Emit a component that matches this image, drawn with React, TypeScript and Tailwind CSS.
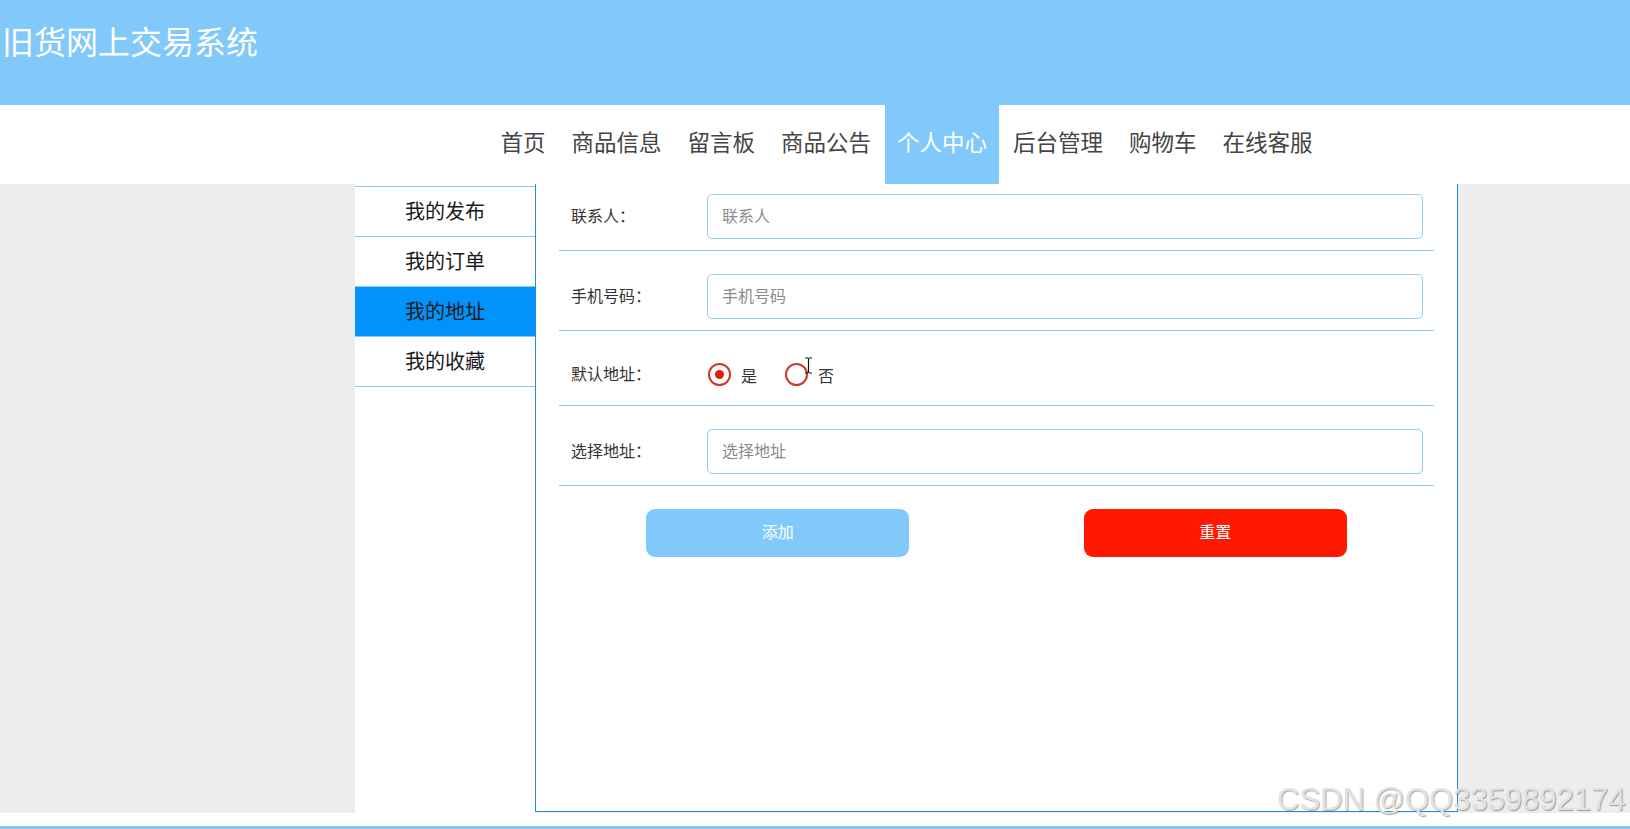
import React from "react";

const navItems = ["首页", "商品信息", "留言板", "商品公告", "个人中心", "后台管理", "购物车", "在线客服"];
const sideItems = ["我的发布", "我的订单", "我的地址", "我的收藏"];

function InputRow({ label, placeholder, first }: { label: string; placeholder: string; first?: boolean }) {
  return (
    <div className={`flex items-center border-b border-[#8cc9ee] pt-[10px] pb-[11px] ${first ? "" : "mt-[13px]"}`}>
      <div className="w-[148px] pl-[12px] pb-[4px] text-[16px] leading-[20px] text-[#333]">{label}</div>
      <input
        className="w-[716px] h-[45px] rounded-[5px] border border-[#93cbee] px-[14px] pb-[3px] text-[16px] text-[#333] placeholder:text-[#8a8a8a] outline-none"
        placeholder={placeholder}
      />
    </div>
  );
}

function Radio({ checked, label }: { checked?: boolean; label: string }) {
  return (
    <div className="flex items-center">
      <span className="w-[23px] h-[23px] rounded-full border-2 border-[#c9392c] flex items-center justify-center">
        {checked && <span className="w-[9px] h-[9px] rounded-full bg-[#e31a0c]" />}
      </span>
      <span className="ml-[10px] text-[16px] leading-[20px] text-[#333]">{label}</span>
    </div>
  );
}

export default function App() {
  return (
    <div className="relative min-h-screen bg-white font-['Noto_Sans_CJK_SC','Noto_Sans',sans-serif]">
      <header className="h-[105px] bg-[#82c9fb] pt-[24px]">
        <h1 className="pl-[2px] text-[32px] leading-[32px] text-white font-normal">旧货网上交易系统</h1>
      </header>

      <nav className="h-[79px] bg-white flex">
        <div className="ml-[355px] w-[1103px] flex justify-center gap-[2px]">
          {navItems.map((n) => (
            <div
              key={n}
              className={`h-full flex items-center px-[12px] pb-[7px] text-[22.5px] leading-[24px] ${
                n === "个人中心" ? "bg-[#82c9fb] text-white" : "text-[#444]"
              }`}
            >
              {n}
            </div>
          ))}
        </div>
      </nav>

      <main className="h-[629px] bg-[#ededed] flex">
        <div className="ml-[355px] flex h-full">
          <aside className="w-[180px] bg-white pt-[2px]">
            <ul className="border-t border-[#8cc9ee]">
              {sideItems.map((s) => (
                <li
                  key={s}
                  className={`h-[50px] border-b border-[#8cc9ee] flex items-center justify-center pb-[2px] text-[20px] leading-[24px] text-[#1a1a1a] ${
                    s === "我的地址" ? "bg-[#0093fc]" : ""
                  }`}
                >
                  {s}
                </li>
              ))}
            </ul>
          </aside>

          <section className="w-[923px] h-[628px] bg-white border-l border-r border-b border-[#1f90d6] px-[23px]">
            <InputRow first label="联系人：" placeholder="联系人" />
            <InputRow label="手机号码：" placeholder="手机号码" />
            <div className="flex items-center border-b border-[#8cc9ee] pt-[10px] pb-[11px] mt-[13px] h-[62px]">
              <div className="w-[148px] pl-[12px] pb-[2px] text-[16px] leading-[20px] text-[#333]">默认地址：</div>
              <div className="flex items-center gap-[28px] pl-[1px] pt-[1px]">
                <Radio checked label="是" />
                <Radio label="否" />
              </div>
            </div>
            <InputRow label="选择地址：" placeholder="选择地址" />
            <div className="grid grid-cols-2 mt-[23px]">
              <div className="flex justify-center">
                <button className="w-[263px] h-[48px] rounded-[9px] bg-[#82c9fb] pb-[4px] text-white text-[16px]">添加</button>
              </div>
              <div className="flex justify-center">
                <button className="w-[263px] h-[48px] rounded-[9px] bg-[#ff1900] pb-[4px] text-white text-[16px]">重置</button>
              </div>
            </div>
          </section>
        </div>
      </main>

      <div className="h-[13px] bg-white" />
      <div className="h-[20px] bg-[#82c9fb]" />

      <svg className="absolute left-[804px] top-[357px]" width="9" height="17" viewBox="0 0 9 17">
        <path d="M1 1h3M5 1h3M4.5 1v15M1 16h3M5 16h3" stroke="#111" strokeWidth="1.2" fill="none" />
      </svg>

      <div className="absolute left-[1277px] top-[784px] text-[31px] leading-none font-['Liberation_Sans',sans-serif] text-[#e2e2e2] [text-shadow:1px_1px_1px_rgba(0,0,0,0.35)] whitespace-nowrap">
        CSDN @QQ3359892174
      </div>
    </div>
  );
}
